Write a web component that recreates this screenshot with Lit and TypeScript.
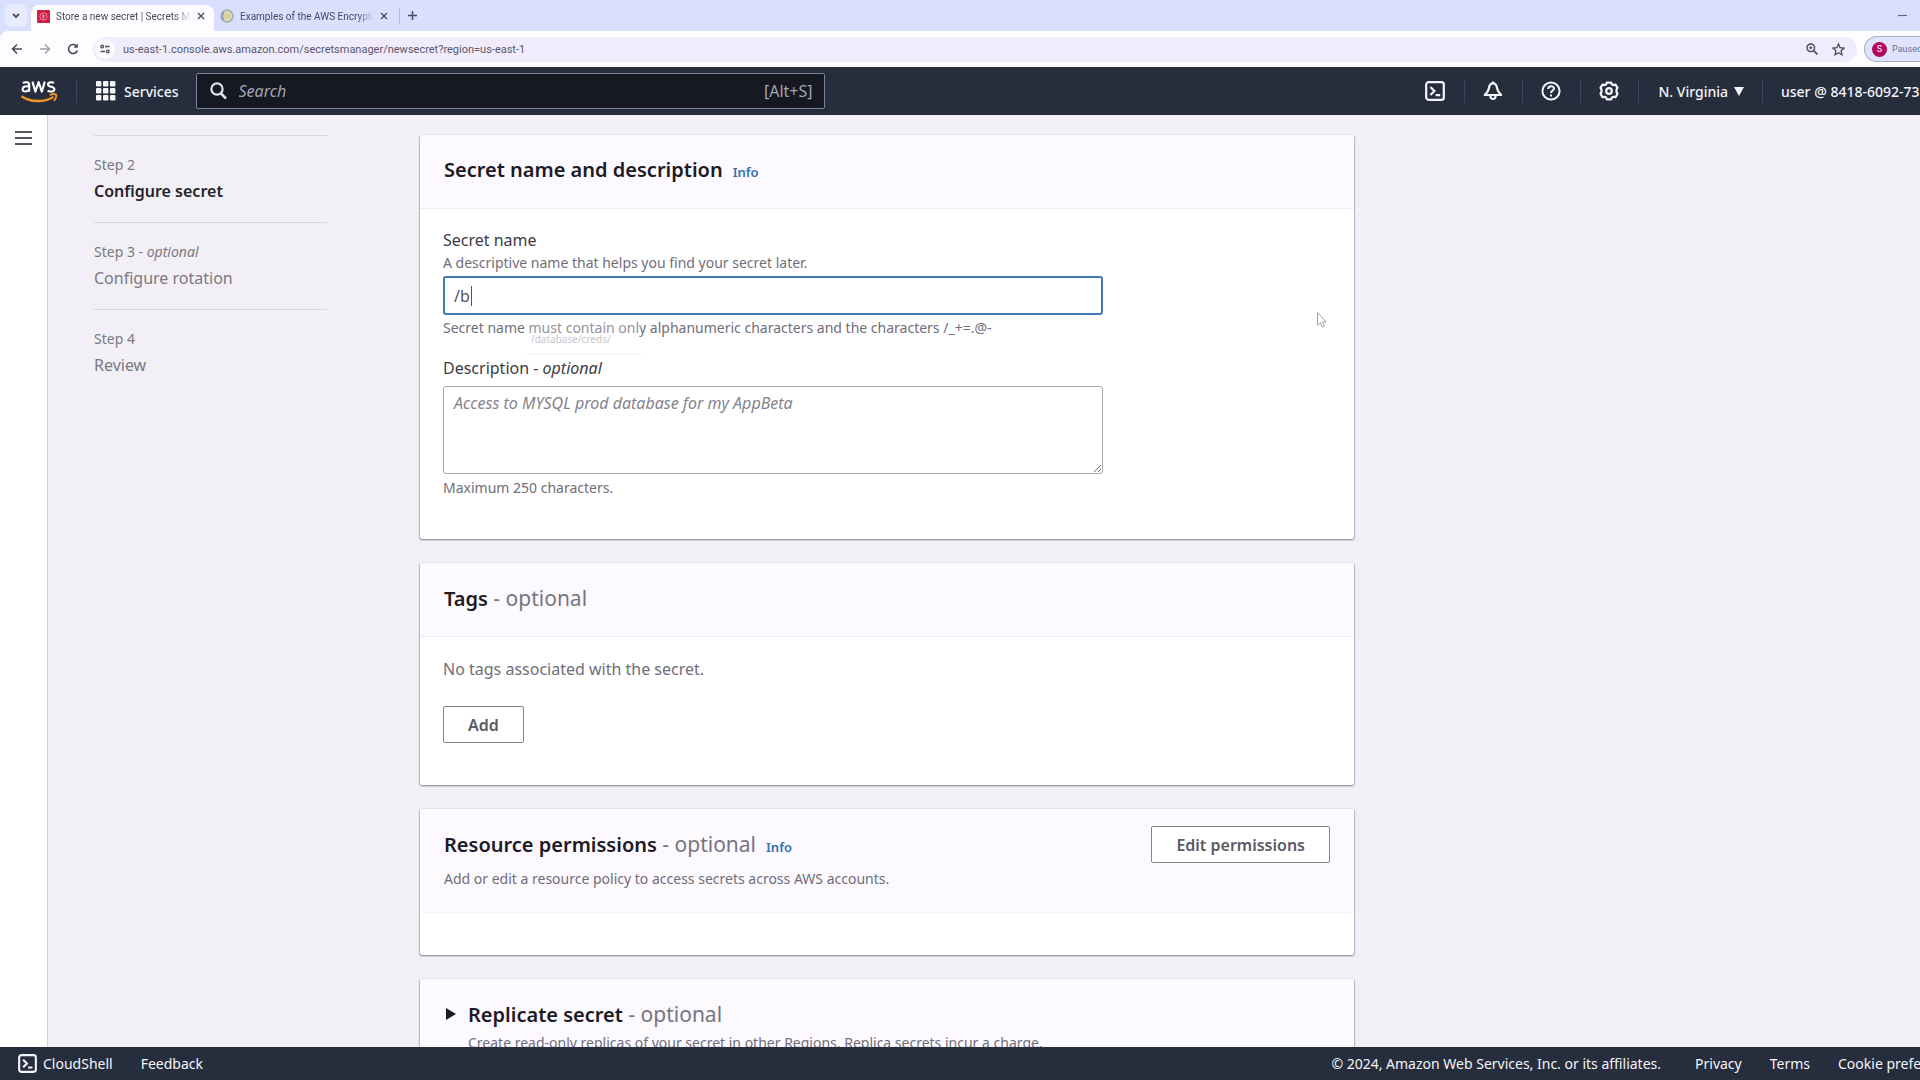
import { LitElement, html, css, svg, nothing } from "lit";
import { customElement, property, state } from "lit/decorators.js";
import { classMap } from "lit/directives/class-map.js";

interface Step {
  label: string;
  title: string;
  optional?: boolean;
  current?: boolean;
}

const STEPS: Step[] = [
  { label: "Step 2", title: "Configure secret", current: true },
  { label: "Step 3", title: "Configure rotation", optional: true },
  { label: "Step 4", title: "Review" },
];

const shellIcon = svg`
  <rect x="1.2" y="1.2" width="17.6" height="17.6" rx="2.4" fill="none" stroke="currentColor" stroke-width="2.2"/>
  <path d="M5.4 6l4 4-4 4M10.6 14.2h4.6" fill="none" stroke="currentColor" stroke-width="2.2"/>`;

@customElement("browser-bar")
export class BrowserBar extends LitElement {
  static styles = css`
    :host {
      display: block;
      flex: none;
      background: #d9e0fe;
      font-family: Roboto, "Open Sans", sans-serif;
      font-size: 11px;
      color: #4c4a58;
    }
    button {
      border: 0;
      padding: 0;
      background: none;
      color: inherit;
      font: inherit;
      display: flex;
      flex: none;
    }
    svg {
      display: block;
      flex: none;
    }
    .tabs {
      display: flex;
      align-items: stretch;
      height: 31px;
      font-size: 10px;
    }
    .switcher {
      width: 22px;
      margin: 4px 4px 4px 5px;
      align-items: center;
      justify-content: center;
      background: #e8ebfe;
      border-radius: 7px;
    }
    .tab {
      display: flex;
      align-items: center;
      gap: 6px;
      margin-top: 5px;
      padding: 0 9px 4px 6px;
      width: 168px;
    }
    .tab.active {
      background: #fdfcff;
      border-radius: 8px 8px 0 0;
    }
    .tab-title {
      flex: 1;
      min-width: 0;
      overflow: hidden;
      white-space: nowrap;
      -webkit-mask-image: linear-gradient(90deg, #000 88%, transparent);
      mask-image: linear-gradient(90deg, #000 88%, transparent);
    }
    .split {
      width: 1px;
      height: 16px;
      margin: 8px 8px 0 2px;
      background: #b6bcd8;
    }
    .minimise {
      margin: 0 13px 0 auto;
      align-items: center;
    }
    .plus {
      align-items: center;
    }
    .toolbar {
      display: flex;
      align-items: center;
      height: 36px;
      padding-left: 9px;
      gap: 12px;
      border-radius: 8px 0 0 0;
      background: #fdfcff;
      overflow: hidden;
    }
    .omnibox {
      flex: 1;
      min-width: 0;
      display: flex;
      align-items: center;
      gap: 14px;
      height: 25px;
      padding: 0 12px 0 2px;
      border-radius: 13px;
      background: #f0ecfc;
    }
    .site {
      width: 20px;
      height: 20px;
      margin-right: -6px;
      border-radius: 10px;
      align-items: center;
      justify-content: center;
      background: #fdfcff;
    }
    .url {
      flex: 1;
      min-width: 0;
      border: 0;
      padding: 0;
      background: none;
      outline: none;
      font: inherit;
      color: #5a5866;
    }
    .profile {
      align-items: center;
      gap: 5px;
      width: 56px;
      height: 26px;
      box-sizing: border-box;
      margin-left: -5px;
      padding-left: 7px;
      border: 1px solid #a9abc0;
      border-right: 0;
      border-radius: 13px 0 0 13px;
      background: #dfe3fd;
      overflow: hidden;
      white-space: nowrap;
      font-size: 9px;
      color: #6b6f90;
    }
    .avatar {
      flex: none;
      width: 15px;
      height: 15px;
      border-radius: 50%;
      background: #b3085f;
      color: #fff;
      line-height: 15px;
      text-align: center;
    }
  `;

  private closeIcon() {
    return html`<svg width="8" height="8" viewBox="0 0 8 8"><path d="M1 1l6 6M7 1L1 7" stroke="currentColor" stroke-width="1.4"/></svg>`;
  }

  render() {
    return html`
      <div class="tabs">
        <button class="switcher" aria-label="Search tabs">
          <svg width="8" height="6" viewBox="0 0 8 6"><path d="M1 1l3 3 3-3" fill="none" stroke="currentColor" stroke-width="1.8"/></svg>
        </button>
        <div class="tab active">
          <svg width="13" height="13" viewBox="0 0 13 13">
            <rect width="13" height="13" rx="1" fill="#cf1f45"/>
            <circle cx="6.5" cy="6.5" r="3.6" fill="none" stroke="#ee8ba0"/>
            <circle cx="6.5" cy="6" r="1.2" fill="#f3a9b8"/>
            <path d="M6.5 6v3" stroke="#f3a9b8"/>
          </svg>
          <span class="tab-title">Store a new secret | Secrets Manager</span>
          <button aria-label="Close tab">${this.closeIcon()}</button>
        </div>
        <div class="tab">
          <svg width="14" height="14" viewBox="0 0 14 14">
            <circle cx="7" cy="7" r="6" fill="#dcd6bd" stroke="#a5acb4" stroke-width="1.6"/>
            <path d="M4 3.4a5 5 0 0 0 0 7.2" fill="none" stroke="#8796a8" stroke-width="1.4"/>
            <circle cx="7.6" cy="7" r="2.6" fill="#e3cd84"/>
          </svg>
          <span class="tab-title">Examples of the AWS Encryption SDK</span>
          <button aria-label="Close tab">${this.closeIcon()}</button>
        </div>
        <span class="split"></span>
        <button class="plus" aria-label="New tab">
          <svg width="9" height="9" viewBox="0 0 9 9"><path d="M4.5 0v9M0 4.5h9" stroke="currentColor" stroke-width="1.5"/></svg>
        </button>
        <button class="minimise" aria-label="Minimise">
          <svg width="9" height="3" viewBox="0 0 9 3"><path d="M0 1.5h9" stroke="#62657c" stroke-width="1.2"/></svg>
        </button>
      </div>
      <div class="toolbar">
        <button aria-label="Back">
          <svg width="16" height="14" viewBox="0 0 16 14"><path d="M13 7H4M8 2.5L3.5 7 8 11.5" fill="none" stroke="currentColor" stroke-width="1.6"/></svg>
        </button>
        <button aria-label="Forward">
          <svg width="16" height="14" viewBox="0 0 16 14"><path d="M3 7h9M8 2.5L12.5 7 8 11.5" fill="none" stroke="#a09eab" stroke-width="1.4"/></svg>
        </button>
        <button aria-label="Reload">
          <svg width="16" height="14" viewBox="0 0 16 14"><path d="M12.3 8.6A4.5 4.5 0 1 1 11.2 3.8" fill="none" stroke="currentColor" stroke-width="1.6"/><path d="M12.8 1.6v4.2H8.6z" fill="currentColor"/></svg>
        </button>
        <div class="omnibox">
          <button class="site" aria-label="Site information">
            <svg width="10" height="10" viewBox="0 0 10 10" fill="none" stroke="currentColor" stroke-width="1.3">
              <circle cx="2.2" cy="2.5" r="1.3"/><path d="M5 2.5h4.5M.5 7.5H5"/><circle cx="7.8" cy="7.5" r="1.3"/>
            </svg>
          </button>
          <input class="url" aria-label="Address" .value=${"us-east-1.console.aws.amazon.com/secretsmanager/newsecret?region=us-east-1"} />
          <button aria-label="Zoom">
            <svg width="12" height="12" viewBox="0 0 12 12" fill="none" stroke="currentColor">
              <circle cx="4.8" cy="4.8" r="3.8" stroke-width="1.4"/><path d="M7.6 7.6l3.8 3.8" stroke-width="1.6"/><path d="M4.8 3v3.6M3 4.8h3.6"/>
            </svg>
          </button>
          <button aria-label="Bookmark">
            <svg width="13" height="13" viewBox="0 0 13 13"><path d="M6.5 1l1.6 3.7 4 .4-3 2.7.9 4-3.5-2.1L3 11.8l.9-4-3-2.7 4-.4z" fill="none" stroke="currentColor" stroke-width="1.3"/></svg>
          </button>
        </div>
        <button class="profile"><span class="avatar">S</span><span>Paused</span></button>
      </div>
    `;
  }
}

@customElement("console-header")
export class ConsoleHeader extends LitElement {
  static styles = css`
    :host {
      display: flex;
      align-items: center;
      flex: none;
      height: 48px;
      background: #262d3d;
      color: #f4f5fa;
      overflow: hidden;
      font-size: 14px;
      font-weight: 500;
    }
    a,
    button {
      display: flex;
      align-items: center;
      flex: none;
      border: 0;
      padding: 0;
      background: none;
      font: inherit;
      color: inherit;
      text-decoration: none;
      white-space: nowrap;
    }
    svg {
      display: block;
      flex: none;
    }
    .logo {
      padding: 0 18px 0 20px;
    }
    .services {
      gap: 8px;
      padding: 0 17px 0 19px;
    }
    .rule {
      flex: none;
      width: 1px;
      height: 24px;
      background: #3c4559;
    }
    .search {
      display: flex;
      align-items: center;
      flex: 0 1 629px;
      min-width: 0;
      gap: 12px;
      box-sizing: border-box;
      height: 36px;
      padding: 0 11px 0 13px;
      border: 1px solid #7b8494;
      border-radius: 2px;
      background: #161822;
    }
    .search input {
      flex: 1;
      min-width: 0;
      border: 0;
      padding: 0;
      outline: none;
      background: none;
      font: inherit;
      font-size: 16px;
      font-weight: 400;
      color: #f4f5fa;
    }
    .search input::placeholder {
      color: #a3a6b3;
      font-style: italic;
      opacity: 1;
    }
    .search span {
      font-size: 16px;
      font-weight: 400;
      color: #a3a6b3;
    }
    .tools {
      display: flex;
      align-items: center;
      flex: none;
      margin-left: auto;
    }
    .tool {
      padding: 0 19px 0 18px;
    }
    .region {
      gap: 6px;
      padding: 0 18px 0 19px;
    }
    .account {
      width: 157px;
      padding-left: 18px;
      overflow: hidden;
    }
  `;

  render() {
    return html`
      <a class="logo" href="#" aria-label="AWS home">
        <svg width="38" height="26" viewBox="0 0 38 26">
          <g fill="none" stroke="#fff" stroke-width="2.1" stroke-linejoin="round">
            <path d="M3 5.2C4.2 4 9.2 3.3 9.2 7v6.8M9.2 8.6C6.5 7.8 2.6 8.2 2.6 11.2c0 3.2 4.8 3 6.600 0"/>
            <path d="M12.4 3.6l3 10 3.2-9.6 3.2 9.6 3-10"/>
            <path d="M34 4.9c-1.8-1-6-.9-6 1.5 0 3 6.4 1.6 6.4 4.8 0 2.9-4.8 2.9-6.8 1.5"/>
          </g>
          <path d="M1.5 18.2c9 6.2 22.5 6.4 32 .8" fill="none" stroke="#f29422" stroke-width="2.4"/>
          <path d="M29.8 17.2c2-1.2 5-1.3 6.5-.7.2 2-.7 4.7-2.5 6.3" fill="none" stroke="#f29422" stroke-width="1.8"/>
        </svg>
      </a>
      <span class="rule"></span>
      <button class="services">
        <svg width="20" height="20" viewBox="0 0 20 20" fill="currentColor">
          ${[0, 7, 14].map((y) => [0, 7, 14].map((x) => svg`<rect x=${x} y=${y} width="5.4" height="5.4" rx="1"/>`))}
        </svg>
        Services
      </button>
      <label class="search">
        <svg width="17" height="18" viewBox="0 0 17 18" fill="none" stroke="#dfe2ee">
          <circle cx="7" cy="7" r="5.6" stroke-width="2.2"/><path d="M11 11.3l5 5.4" stroke-width="2.6"/>
        </svg>
        <input type="search" placeholder="Search" aria-label="Search" />
        <span>[Alt+S]</span>
      </label>
      <nav class="tools">
        <button class="tool" aria-label="CloudShell"><svg width="20" height="20" viewBox="0 0 20 20">${shellIcon}</svg></button>
        <span class="rule"></span>
        <button class="tool" aria-label="Notifications">
          <svg width="20" height="20" viewBox="0 0 20 20" fill="none" stroke="currentColor" stroke-width="2.2" stroke-linejoin="round">
            <path d="M10 2.4c-2.4 0-3.6 1.8-4 4.6C5.5 10.3 4.2 11.8 1.8 14h16.4c-2.4-2.2-3.7-3.7-4.2-7-.4-2.8-1.6-4.6-4-4.6z"/>
            <path d="M7.4 15c.2 4 5 4 5.2 0M10 .4V2"/>
          </svg>
        </button>
        <span class="rule"></span>
        <button class="tool" aria-label="Help">
          <svg width="20" height="20" viewBox="0 0 20 20" fill="none" stroke="currentColor" stroke-width="2">
            <circle cx="10" cy="10" r="8.6"/><path d="M7.2 8c0-3.8 5.8-3.6 5.8-.4 0 2.1-3 2-3 4.3"/><path d="M10 13.4v2.2"/>
          </svg>
        </button>
        <span class="rule"></span>
        <button class="tool" aria-label="Settings">
          <svg width="20" height="20" viewBox="0 0 20 20" fill="none" stroke="currentColor" stroke-width="2.2" stroke-linejoin="round">
            <path d="M7.8 1.7h4.4l.7 1.7 1.8.7 1.8-.6 2 3.4-1 1.6v2.6l1 1.7-2 3.5-1.8-.5-1.8.8-.7 1.7H7.8l-.7-1.7-1.8-.8-1.8.5-2-3.5 1-1.7V8.5l-1-1.6 2-3.4 1.8.6 1.8-.7z"/>
            <circle cx="10" cy="10" r="2.8"/>
          </svg>
        </button>
        <span class="rule"></span>
        <button class="region">
          N. Virginia
          <svg width="10" height="9" viewBox="0 0 10 9"><path d="M0 0h10L5 9z" fill="currentColor"/></svg>
        </button>
        <span class="rule"></span>
        <button class="account">user @ 8418-6092-73</button>
      </nav>
    `;
  }
}

@customElement("console-footer")
export class ConsoleFooter extends LitElement {
  static styles = css`
    :host {
      display: flex;
      align-items: center;
      flex: none;
      height: 33px;
      padding-left: 18px;
      background: #262d3d;
      color: #f4f5fa;
      font-size: 14px;
      white-space: nowrap;
      overflow: hidden;
    }
    button,
    a {
      display: flex;
      align-items: center;
      gap: 6px;
      border: 0;
      padding: 0;
      background: none;
      font: inherit;
      color: inherit;
      text-decoration: none;
    }
    .left,
    .right {
      display: flex;
      align-items: center;
      gap: 28px;
    }
    .right {
      flex: none;
      margin-left: auto;
    }
    .legal {
      margin-right: 6px;
    }
    .cookies {
      width: 82px;
      overflow: hidden;
    }
  `;

  render() {
    return html`
      <div class="left">
        <button><svg width="19" height="19" viewBox="0 0 20 20">${shellIcon}</svg>CloudShell</button>
        <button>Feedback</button>
      </div>
      <div class="right">
        <span class="legal">© 2024, Amazon Web Services, Inc. or its affiliates.</span>
        <a href="#">Privacy</a>
        <a href="#">Terms</a>
        <a class="cookies" href="#">Cookie preferences</a>
      </div>
    `;
  }
}

@customElement("panel-card")
export class PanelCard extends LitElement {
  @property() heading = "";
  @property({ type: Boolean }) optional = false;
  @property({ type: Boolean }) info = false;
  @property({ type: Boolean }) expandable = false;
  @property() description = "";

  static styles = css`
    :host {
      display: block;
      background: #fff;
      border-radius: 2px;
      box-shadow: 0 1px 2px 0 rgba(40, 36, 60, 0.55), -1px 0 1px 0 rgba(40, 36, 60, 0.15), 1px 0 1px 0 rgba(40, 36, 60, 0.15);
    }
    .head {
      display: flex;
      align-items: flex-start;
      gap: 15px;
      min-height: 74px;
      box-sizing: border-box;
      padding: 17px 24px;
      border-bottom: 1px solid #efecf3;
      background: #fcf9ff;
    }
    .head.described {
      padding-bottom: 23px;
      border-bottom-color: #f8f5fb;
    }
    .text {
      flex: 1;
      min-width: 0;
    }
    .title {
      display: flex;
      align-items: baseline;
      gap: 10px;
    }
    h2 {
      margin: 0;
      font-size: 20px;
      line-height: 36px;
      font-weight: 600;
      color: #1c1a24;
    }
    .optional {
      font-size: 21px;
      font-weight: 400;
      color: #77757f;
    }
    a {
      font-size: 13px;
      font-weight: 600;
      color: #3570ae;
      text-decoration: none;
    }
    p {
      margin: 6px 0 0;
      font-size: 14px;
      line-height: 20px;
      color: #706e78;
    }
    .expandable p {
      margin-top: 0;
    }
    .caret {
      margin-top: 12px;
      margin-left: 2px;
      margin-right: -3px;
      border: 0;
      padding: 0;
      background: none;
      color: #1c1a24;
    }
    .caret svg {
      display: block;
    }
  `;

  render() {
    return html`
      <header class=${classMap({ head: true, described: !!this.description, expandable: this.expandable })}>
        ${this.expandable
          ? html`<button class="caret" aria-label="Expand">
              <svg width="10" height="12" viewBox="0 0 10 12"><path d="M0 0l10 6-10 6z" fill="currentColor"/></svg>
            </button>`
          : nothing}
        <div class="text">
          <div class="title">
            <h2>${this.heading}${this.optional ? html`<span class="optional"> - optional</span>` : nothing}</h2>
            ${this.info ? html`<a href="#">Info</a>` : nothing}
          </div>
          ${this.description ? html`<p>${this.description}</p>` : nothing}
        </div>
        <slot name="actions"></slot>
      </header>
      <slot></slot>
    `;
  }
}

@customElement("app-root")
export class AppRoot extends LitElement {
  @state() private secretName = "/b";

  static styles = css`
    :host {
      display: flex;
      flex-direction: column;
      height: 100vh;
      overflow: hidden;
      font-family: "Noto Sans", "Open Sans", sans-serif;
      font-size: 16px;
      color: #706e78;
      background: #f2f0f6;
    }
    .body {
      flex: 1;
      min-height: 0;
      display: flex;
    }
    .rail {
      flex: none;
      width: 47px;
      border-right: 1px solid #d3d1d8;
      background: #fff;
    }
    .menu {
      display: block;
      margin: 16px 0 0 15px;
      border: 0;
      padding: 0;
      background: none;
      color: #55535e;
    }
    .menu svg {
      display: block;
    }
    main {
      flex: 1;
      min-width: 0;
      display: grid;
      grid-template-columns: 233px minmax(0, 934px);
      column-gap: 93px;
      align-items: start;
      padding: 20px 46px 0;
      overflow: hidden;
    }
    .steps {
      margin: 0;
      padding: 0;
      list-style: none;
    }
    .steps li {
      box-sizing: border-box;
      height: 87px;
      border-top: 1px solid #d9d7de;
      padding-top: 18px;
    }
    .step-label {
      font-size: 14px;
      line-height: 22px;
      color: #7b7983;
    }
    .step-title {
      margin-top: 3px;
      font-size: 16px;
      line-height: 24px;
      color: #7b7983;
    }
    .current .step-title {
      font-weight: 600;
      color: #25232d;
    }
    em {
      font-style: italic;
    }
    .cards {
      display: grid;
      gap: 24px;
    }
    .form {
      display: flex;
      flex-direction: column;
      max-width: 660px;
      padding: 19px 24px 40px 23px;
    }
    label {
      line-height: 24px;
      color: #3d3b46;
    }
    .hint {
      font-size: 14px;
      line-height: 22px;
    }
    .field {
      position: relative;
      display: grid;
      margin-top: 2px;
    }
    input,
    textarea {
      box-sizing: border-box;
      width: 100%;
      font: inherit;
      border-radius: 3px;
      background: #fff;
      outline: none;
    }
    input {
      height: 39px;
      padding: 0 9px;
      border: 2px solid #4379b4;
      color: #55535e;
    }
    .caret {
      position: absolute;
      left: 28px;
      top: 10px;
      width: 1px;
      height: 20px;
      background: #55535e;
    }
    .suggestion {
      position: absolute;
      left: 82px;
      top: 42px;
      width: 116px;
      height: 37px;
      box-sizing: border-box;
      padding: 13px 6px 0;
      border-bottom: 1px solid #f0eff3;
      background: rgba(255, 255, 255, 0.25);
      font-size: 10px;
      line-height: 16px;
      color: #c8c5d0;
    }
    .constraint {
      margin: 2px 0 17px;
    }
    textarea {
      height: 88px;
      margin: 6px 0 3px;
      padding: 4px 10px;
      border: 1px solid #a9a7b0;
      line-height: 24px;
      resize: vertical;
    }
    textarea::placeholder {
      color: #85838d;
      font-style: italic;
      opacity: 1;
    }
    .tags {
      padding: 20px 24px 42px 23px;
    }
    .tags p {
      margin: 0 0 25px;
      line-height: 24px;
    }
    .button {
      height: 37px;
      box-sizing: border-box;
      padding: 0 24px;
      border: 1px solid #85838d;
      border-radius: 2px;
      background: #fff;
      font: inherit;
      font-weight: 600;
      color: #5c5a64;
      white-space: nowrap;
    }
    .blank {
      height: 42px;
    }
    .pointer {
      position: absolute;
      left: 1316px;
      top: 311px;
    }
  `;

  render() {
    return html`
      <browser-bar></browser-bar>
      <console-header></console-header>
      <div class="body">
        <aside class="rail">
          <button class="menu" aria-label="Open navigation">
            <svg width="17" height="14" viewBox="0 0 17 14"><path d="M0 1h17M0 7h17M0 13h17" stroke="currentColor" stroke-width="2"/></svg>
          </button>
        </aside>
        <main>
          <ol class="steps">
            ${STEPS.map(
              (s) => html`<li class=${classMap({ current: !!s.current })}>
                <div class="step-label">${s.label}${s.optional ? html` - <em>optional</em>` : nothing}</div>
                <div class="step-title">${s.title}</div>
              </li>`,
            )}
          </ol>
          <div class="cards">
            <panel-card heading="Secret name and description" info>
              <div class="form">
                <label for="name">Secret name</label>
                <span class="hint">A descriptive name that helps you find your secret later.</span>
                <div class="field">
                  <input
                    id="name"
                    .value=${this.secretName}
                    @input=${(e: Event) => (this.secretName = (e.target as HTMLInputElement).value)}
                  />
                  <span class="caret"></span>
                  <span class="suggestion">/database/creds/</span>
                </div>
                <span class="hint constraint">Secret name must contain only alphanumeric characters and the characters /_+=.@-</span>
                <label for="description">Description - <em>optional</em></label>
                <textarea id="description" placeholder="Access to MYSQL prod database for my AppBeta"></textarea>
                <span class="hint">Maximum 250 characters.</span>
              </div>
            </panel-card>
            <panel-card heading="Tags" optional>
              <div class="tags">
                <p>No tags associated with the secret.</p>
                <button class="button">Add</button>
              </div>
            </panel-card>
            <panel-card
              heading="Resource permissions"
              optional
              info
              description="Add or edit a resource policy to access secrets across AWS accounts."
            >
              <button class="button" slot="actions">Edit permissions</button>
              <div class="blank"></div>
            </panel-card>
            <panel-card
              heading="Replicate secret"
              optional
              expandable
              description="Create read-only replicas of your secret in other Regions. Replica secrets incur a charge."
            ></panel-card>
          </div>
        </main>
      </div>
      <console-footer></console-footer>
      <svg class="pointer" width="12" height="18" viewBox="0 0 12 18">
        <path d="M1.5 1.5v12.8l2.8-2.5 1.9 4.4 2.2-1-1.9-4.2h3.7z" fill="#fff" stroke="#a3a1a8"/>
      </svg>
    `;
  }
}
